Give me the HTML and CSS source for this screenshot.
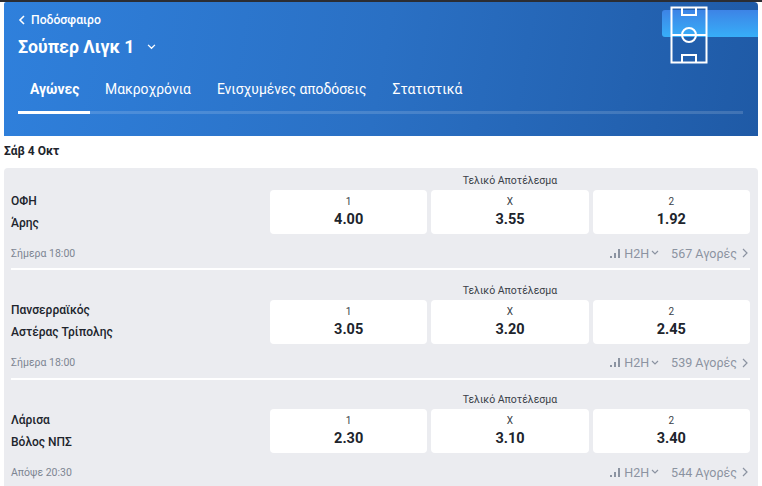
FILE: index.html
```html
<!DOCTYPE html>
<html lang="el">
<head>
    <meta charset="UTF-8">
    <title>Σούπερ Λιγκ 1</title>
    <link rel="stylesheet" href="styles.css">
</head>
<body>
    <div class="topbar"></div>
    <div class="header">
        <div class="back">
            <svg class="back-icon" width="8" height="10" viewBox="0 0 8 10"><path d="M6 1 2 5l4 4" fill="none" stroke="#fff" stroke-width="1.6"/></svg>
            <span>Ποδόσφαιρο</span>
        </div>
        <div class="league">
            <span>Σούπερ Λιγκ 1</span>
            <svg width="9" height="6" viewBox="0 0 10 7"><path d="M1 1l4 4 4-4" fill="none" stroke="#fff" stroke-width="1.5"/></svg>
        </div>
        <div class="tabs">
            <div class="tab active">Αγώνες</div>
            <div class="tab">Μακροχρόνια</div>
            <div class="tab">Ενισχυμένες αποδόσεις</div>
            <div class="tab">Στατιστικά</div>
        </div>
        <div class="banner"></div>
        <svg class="pitch" width="38" height="58" viewBox="0 0 38 58">
            <g fill="none" stroke="#fff" stroke-width="2">
                <rect x="1.5" y="1.500" width="35" height="55"/>
                <path d="M1.500 29h35"/>
                <circle cx="19" cy="29" r="7"/>
                <path d="M12 1.500V9h14V1.500M12 56.500V49h14v7.500"/>
            </g>
        </svg>
    </div>

    <div class="day">Σάβ 4 Οκτ</div>

    <div class="card">
        <div class="match">
            <div class="market">Τελικό Αποτέλεσμα</div>
            <div class="match-main">
                <div class="teams">
                    <div>ΟΦΗ</div>
                    <div>Άρης</div>
                </div>
                <div class="odds">
                    <div class="odd"><span class="odd-label">1</span><span class="odd-value">4.00</span></div>
                    <div class="odd"><span class="odd-label">X</span><span class="odd-value">3.55</span></div>
                    <div class="odd"><span class="odd-label">2</span><span class="odd-value">1.92</span></div>
                </div>
            </div>
            <div class="match-foot">
                <span class="time">Σήμερα 18:00</span>
                <div class="links">
                    <svg width="10" height="9" viewBox="0 0 10 9"><path d="M0 7h2v2H0zM4 4h2v5H4zM8 0h2v9H8z" fill="#8b93a1"/></svg>
                    <span class="h2h">H2H</span>
                    <svg width="8" height="6" viewBox="0 0 8 6"><path d="M1 1l3 3 3-3" fill="none" stroke="#8b93a1" stroke-width="1.200"/></svg>
                    <span class="markets">567 Αγορές</span>
                    <svg width="6" height="10" viewBox="0 0 6 10"><path d="M1 1l4 4-4 4" fill="none" stroke="#8b93a1" stroke-width="1.200"/></svg>
                </div>
            </div>
        </div>

        <div class="match">
            <div class="market">Τελικό Αποτέλεσμα</div>
            <div class="match-main">
                <div class="teams">
                    <div>Πανσερραϊκός</div>
                    <div>Αστέρας Τρίπολης</div>
                </div>
                <div class="odds">
                    <div class="odd"><span class="odd-label">1</span><span class="odd-value">3.05</span></div>
                    <div class="odd"><span class="odd-label">X</span><span class="odd-value">3.20</span></div>
                    <div class="odd"><span class="odd-label">2</span><span class="odd-value">2.45</span></div>
                </div>
            </div>
            <div class="match-foot">
                <span class="time">Σήμερα 18:00</span>
                <div class="links">
                    <svg width="10" height="9" viewBox="0 0 10 9"><path d="M0 7h2v2H0zM4 4h2v5H4zM8 0h2v9H8z" fill="#8b93a1"/></svg>
                    <span class="h2h">H2H</span>
                    <svg width="8" height="6" viewBox="0 0 8 6"><path d="M1 1l3 3 3-3" fill="none" stroke="#8b93a1" stroke-width="1.200"/></svg>
                    <span class="markets">539 Αγορές</span>
                    <svg width="6" height="10" viewBox="0 0 6 10"><path d="M1 1l4 4-4 4" fill="none" stroke="#8b93a1" stroke-width="1.200"/></svg>
                </div>
            </div>
        </div>

        <div class="match">
            <div class="market">Τελικό Αποτέλεσμα</div>
            <div class="match-main">
                <div class="teams">
                    <div>Λάρισα</div>
                    <div>Βόλος ΝΠΣ</div>
                </div>
                <div class="odds">
                    <div class="odd"><span class="odd-label">1</span><span class="odd-value">2.30</span></div>
                    <div class="odd"><span class="odd-label">X</span><span class="odd-value">3.10</span></div>
                    <div class="odd"><span class="odd-label">2</span><span class="odd-value">3.40</span></div>
                </div>
            </div>
            <div class="match-foot">
                <span class="time">Απόψε 20:30</span>
                <div class="links">
                    <svg width="10" height="9" viewBox="0 0 10 9"><path d="M0 7h2v2H0zM4 4h2v5H4zM8 0h2v9H8z" fill="#8b93a1"/></svg>
                    <span class="h2h">H2H</span>
                    <svg width="8" height="6" viewBox="0 0 8 6"><path d="M1 1l3 3 3-3" fill="none" stroke="#8b93a1" stroke-width="1.200"/></svg>
                    <span class="markets">544 Αγορές</span>
                    <svg width="6" height="10" viewBox="0 0 6 10"><path d="M1 1l4 4-4 4" fill="none" stroke="#8b93a1" stroke-width="1.200"/></svg>
                </div>
            </div>
        </div>
    </div>
</body>
</html>
```

FILE: styles.css
```css
* {
    margin: 0;
    padding: 0;
    box-sizing: border-box;
}

html, body {
    height: 486px;
    overflow: hidden;
}

body {
    background: #fff;
    font-family: Roboto, "Noto Sans", sans-serif;
    color: #20242c;
}

.topbar {
    height: 2px;
    background: #2b2d33;
}

.header {
    position: relative;
    height: 134px;
    margin: 0 4px 0 4px;
    padding: 9px 15px 0 14px;
    background: linear-gradient(100deg, #2f80dc 0%, #2a70c4 50%, #1f5aa6 100%);
    border-radius: 2px 4px 0 0;
    color: #fff;
}

.back {
    display: flex;
    align-items: center;
    gap: 5px;
    height: 18px;
    font-size: 12.200px;
    font-weight: 500;
}

.league {
    display: flex;
    align-items: center;
    gap: 13px;
    margin-top: 5px;
    height: 26px;
    font-size: 17.700px;
    font-weight: 700;
}

.tabs {
    display: flex;
    margin-top: 16px;
    height: 38px;
    border-bottom: 3px solid rgba(255, 255, 255, 0.15);
    font-size: 13.900px;
}

.tab {
    padding: 0 13px;
    height: 38px;
    line-height: 26px;
    white-space: nowrap;
}

.tab.active {
    width: 72px;
    padding: 0 0 0 12px;
    border-bottom: 3px solid #fff;
    font-weight: 700;
    margin-right: 2px;
}

.banner {
    position: absolute;
    top: 8px;
    right: 0;
    width: 96px;
    height: 27px;
    border-radius: 3px 0 0 3px;
    background: linear-gradient(180deg, #3d84e6 0%, #37aef8 100%);
}

.pitch {
    position: absolute;
    top: 4px;
    left: 666px;
}

.day {
    height: 32px;
    padding: 7px 0 0 4px;
    font-size: 12px;
    font-weight: 700;
    line-height: 16px;
}

.card {
    margin: 0 4px;
    height: 318px;
    padding: 6px 8px 0 7px;
    background: #ebecf0;
    border-radius: 4px 4px 0 0;
}

.match {
    border-bottom: 2px solid #fff;
}

.match + .match {
    padding-top: 13.700px;
}

.match:last-child {
    border-bottom: none;
}

.market {
    height: 16px;
    margin-left: 259px;
    text-align: center;
    font-size: 10.500px;
    line-height: 14px;
    color: #3a3f48;
}

.match-main {
    display: flex;
    justify-content: space-between;
}

.teams {
    display: flex;
    flex-direction: column;
    justify-content: center;
    gap: 7px;
    font-size: 12px;
    font-weight: 500;
    line-height: 15px;
}

.odds {
    display: flex;
    gap: 4px;
    width: 480px;
}

.odd {
    flex: 1;
    display: flex;
    flex-direction: column;
    align-items: center;
    height: 44px;
    padding-top: 5px;
    background: #fff;
    border-radius: 4px;
}

.odd-label {
    font-size: 10px;
    line-height: 13px;
    color: #3a3f48;
}

.odd-value {
    margin-top: 3px;
    font-size: 14.500px;
    font-weight: 700;
    line-height: 18px;
}

.match-foot {
    display: flex;
    justify-content: space-between;
    align-items: center;
    height: 34px;
    padding-top: 4px;
}

.time {
    font-size: 10.500px;
    color: #7d8592;
}

.links {
    display: flex;
    align-items: center;
    font-size: 12.500px;
    color: #8b93a1;
    padding-right: 2px;
}

.h2h {
    margin-left: 4px;
    margin-right: 2px;
}

.markets {
    margin-left: 12px;
    margin-right: 5px;
}
```
